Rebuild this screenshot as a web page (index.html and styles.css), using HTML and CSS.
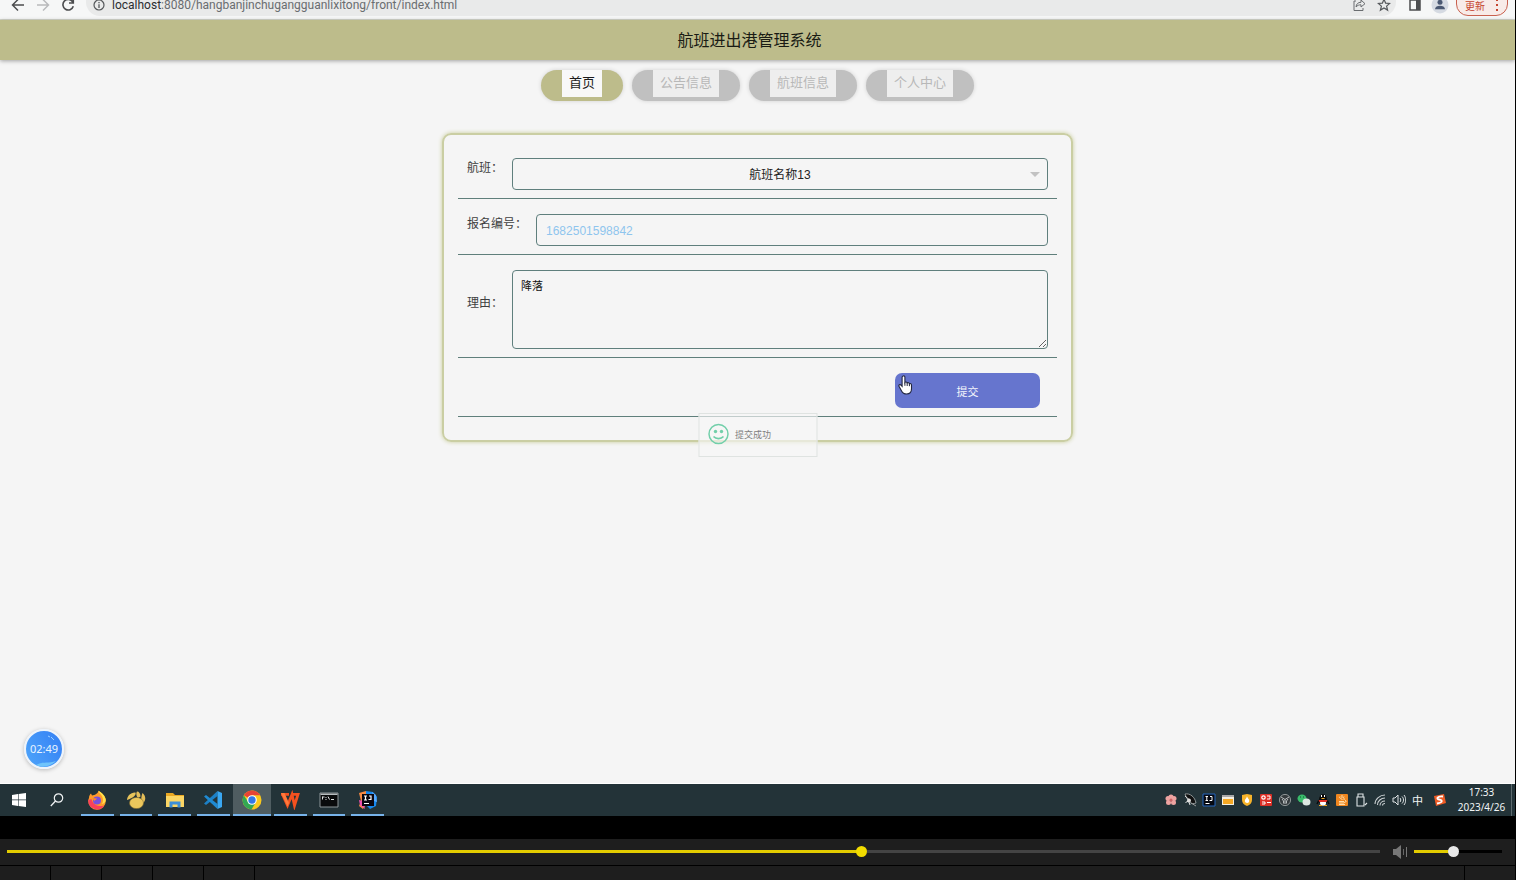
FILE: index.html
```html
<!DOCTYPE html>
<html lang="zh-CN">
<head>
<meta charset="utf-8">
<title>航班进出港管理系统</title>
<link rel="stylesheet" href="styles.css">
</head>
<body>
<div class="browser-bar">
  <button class="tool" aria-label="后退"><svg width="14" height="14" viewBox="0 0 14 14"><path d="M13 7H2M7 1.5L1.5 7L7 12.500" fill="none" stroke="#4c4d4f" stroke-width="1.500"/></svg></button>
  <button class="tool" aria-label="前进"><svg width="14" height="14" viewBox="0 0 14 14"><path d="M1 7h11M7 1.500L12.500 7L7 12.500" fill="none" stroke="#b9babc" stroke-width="1.500"/></svg></button>
  <button class="tool" aria-label="刷新"><svg width="14" height="14" viewBox="0 0 14 14"><path d="M11.800 4A5.300 5.300 0 1 0 12.300 8.300M12.300 0.500V5H8" fill="none" stroke="#4c4d4f" stroke-width="1.600"/></svg></button>
  <div class="omnibox">
    <svg width="12" height="12" viewBox="0 0 12 12"><circle cx="6" cy="6" r="5" fill="none" stroke="#55585b" stroke-width="1.200"/><path d="M6 5.300V9M6 3V4.300" stroke="#55585b" stroke-width="1.300"/></svg>
    <span class="url"><span class="host">localhost</span>:8080/hangbanjinchugangguanlixitong/front/index.html</span>
    <svg class="share" width="14" height="14" viewBox="0 0 14 14"><path d="M4 3H2v9.500h9V10M4 9c.3-3 2-4.700 5-4.700V2l4 3.700L9 9V6.800C7 6.800 5.500 7.300 4 9z" fill="none" stroke="#6a6d70"/></svg>
    <svg width="14" height="14" viewBox="0 0 14 14"><path d="M7 1.300l1.600 3.800 4.100.3-3.100 2.700 1 4L7 9.900l-3.600 2.200 1-4L1.300 5.400l4.100-.3z" fill="none" stroke="#55585b" stroke-width="1.200"/></svg>
  </div>
  <button class="tool panel-tool" aria-label="侧边栏"><svg width="12" height="12" viewBox="0 0 12 12"><path d="M1 1h10v10H1z" fill="none" stroke="#4c4d4f" stroke-width="1.500"/><path d="M7 1h4v10H7z" fill="#4c4d4f"/></svg></button>
  <button class="tool avatar" aria-label="用户"><svg width="18" height="18" viewBox="0 0 18 18"><circle cx="9" cy="9" r="8.500" fill="#d5dae2"/><circle cx="9" cy="6.300" r="2.500" fill="#4a5872"/><path d="M4 13.200c0-4.600 10-4.600 10 0z" fill="#4a5872"/></svg></button>
  <button class="update">更新<svg width="4" height="14" viewBox="0 0 4 14"><path d="M1 1h2v2H1zM1 6h2v2H1zM1 11h2v2H1z" fill="#c5442f"/></svg></button>
</div>

<main class="page">
  <header class="site-title">航班进出港管理系统</header>
  <nav class="menu">
    <a class="pill active" href="#"><span>首页</span></a>
    <a class="pill" href="#"><span>公告信息</span></a>
    <a class="pill" href="#"><span>航班信息</span></a>
    <a class="pill" href="#"><span>个人中心</span></a>
  </nav>
  <form class="panel">
    <div class="row">
      <label for="flight">航班：</label>
      <div class="select-wrap">
        <select id="flight" class="field"><option>航班名称13</option></select>
        <svg class="caret" width="10" height="5" viewBox="0 0 10 5"><path d="M0 0h10L5 5z" fill="#c2c2c2"/></svg>
      </div>
    </div>
    <div class="row">
      <label for="code">报名编号：</label>
      <input id="code" class="field code" type="text" value="1682501598842">
    </div>
    <div class="row">
      <label for="reason">理由：</label>
      <textarea id="reason" class="field reason">降落</textarea>
    </div>
    <div class="row actions">
      <button class="submit" type="button">提交</button>
      <svg class="cursor" width="16" height="20" viewBox="0 0 16 20"><path d="M5 1c1-.4 1.900.2 1.900 1.200v5.300c.7-.8 2-.5 2.300.4.800-.6 2-.2 2.200.8.900-.4 2.100.2 2.100 1.300v3.800c0 3-1.700 5.200-4.800 5.200-2.700 0-4.300-1.300-5.400-3.600L1 11.200c-.5-1.200.9-2.100 1.800-1.200l1.300 1.400V2.200C4.100 1.600 4.400 1.200 5 1z" fill="#fff" stroke="#22263f" stroke-width="1.100"/><path d="M6.900 7.500v3.300M9.200 8v3M11.400 8.900v2.300" stroke="#22263f"/></svg>
    </div>
  </form>
  <div class="toast" role="status">
    <svg width="22" height="22" viewBox="0 0 22 22"><circle cx="11" cy="11" r="9.500" fill="none" stroke="#72cfaa" stroke-width="1.500"/><circle cx="8" cy="8.500" r="1.700" fill="#72cfaa"/><circle cx="14" cy="8.500" r="1.700" fill="#72cfaa"/><path d="M6 13.500c2.500 2.800 7.500 2.800 10 0" fill="none" stroke="#72cfaa" stroke-width="1.700"/></svg>
    <span>提交成功</span>
  </div>
  <div class="timer"><svg class="wave" width="36" height="36" viewBox="0 0 36 36"><path d="M10 34c7-4 12-1 20-4-6 6-14 7-20 4z" fill="#6fc4fb"/><path d="M22 5l2 1M25 6l3 3" stroke="#9bd0ff" stroke-width="1"/></svg><span>02:49</span></div>
</main>

<footer class="taskbar">
  <button class="task" aria-label="开始"><svg width="14" height="14" viewBox="0 0 14 14"><path d="M0 2l6-1v5.600H0zM6.600.900L14 0v6.600H6.600zM0 7.300h6V13l-6-1zM6.600 7.300H14V14l-7.400-1z" fill="#fff"/></svg></button>
  <button class="task" aria-label="搜索"><svg width="14" height="14" viewBox="0 0 14 14"><circle cx="8.500" cy="5" r="4.200" fill="none" stroke="#f0f3f4" stroke-width="1.200"/><path d="M5.500 8L.800 13" stroke="#f0f3f4" stroke-width="1.300"/></svg></button>
  <div class="apps">
    <button class="task app" aria-label="Firefox"><svg width="20" height="20" viewBox="0 0 20 20"><path d="M2 8c0-2 .8-3.500 2-4.500l1 2 3-.8C9.500 4 11 3 11.500.8 15 3 18.800 6.500 18.800 11A8.800 8.800 0 0 1 1.200 11c0-1 .3-2 .8-3z" fill="#ff9a2a"/><path d="M1.300 10a8.800 8.800 0 0 0 16 5.500C13 17 6 16 4.500 9z" fill="#f9405c"/><path d="M11.500.8c0 3 4.500 4 4.500 9.200 0 2-.5 3-1.500 4 3-.5 4.300-2.500 4.300-4C18.500 6 15 3 11.500.800z" fill="#ffe04a"/><circle cx="10" cy="10.500" r="4" fill="#7950dd"/><path d="M5 8l5 .6c-.5 1.400-2 1.200-2.500 2.400z" fill="#ff8a25"/></svg></button>
    <button class="task app" aria-label="Navicat"><svg width="20" height="20" viewBox="0 0 20 20"><path d="M1 10C1 6 5 2 9.500 2.500 10.500 5 7 8 1 10z" fill="#e8c45a"/><path d="M11 1.500c2 0 3.500 2 3.500 5L12 8c-2-2-2-5-1-6.500zM16.500 3c4 3 3.500 9-.5 10.500-1.500-4-.5-8 .5-10.500z" fill="#e3bd58"/><ellipse cx="10.500" cy="13" rx="7" ry="5.600" fill="#ebc75c" stroke="#7e6a30" stroke-width=".6"/></svg></button>
    <button class="task app" aria-label="文件资源管理器"><svg width="20" height="20" viewBox="0 0 20 20"><path d="M1 3h7l2 2h9v12H1z" fill="#e9a823"/><path d="M1 6h18v11H1z" fill="#fbd664"/><path d="M4.500 17.500v-6h11v6h-3v-3h-5v3z" fill="#3d8fd6"/></svg></button>
    <button class="task app" aria-label="VS Code"><svg width="20" height="20" viewBox="0 0 20 20"><path d="M14.500 1v5L3 15l-2-1.500z" fill="#1c80c6"/><path d="M14.500 19v-5L3 5 1 6.500z" fill="#1f8ad2"/><path d="M14.500 1L19 3v14l-4.500 2z" fill="#3aa8f2"/></svg></button>
    <button class="task app current" aria-label="Chrome"><svg width="20" height="20" viewBox="0 0 20 20"><circle cx="10" cy="10" r="9.500" fill="#fbc91c"/><path d="M10 10L1.800 5.200A9.500 9.500 0 0 1 18.200 5.200H10z" fill="#e74435"/><path d="M1.800 5.200A9.500 9.500 0 0 0 9.500 19.500L14 12l-8-.2z" fill="#33a753"/><circle cx="10" cy="10" r="4.800" fill="#fff"/><circle cx="10" cy="10" r="3.700" fill="#3478e6"/></svg></button>
    <button class="task app" aria-label="WPS"><svg width="20" height="20" viewBox="0 0 20 20"><path d="M1 4.300h8M2.500 4.500l5 11 4.500-11 2.500 11L18 4.300h-6" fill="none" stroke="#f4511f" stroke-width="2.800"/><path d="M1 3h3.500L9 13l-1.500 3.500z" fill="#ff7a3c"/></svg></button>
    <button class="task app" aria-label="命令提示符"><svg width="20" height="20" viewBox="0 0 20 20"><path d="M1 3h18v14H1z" fill="#090b0c" stroke="#8d9698"/><path d="M1.500 3.500h17v1.500h-17z" fill="#b6bdbf"/><path d="M3.500 6.500v3M3.500 7h2M7 7v1M7 9v1M9 6.500l1.500 3M12 9.500h3" stroke="#dce0e1"/></svg></button>
    <button class="task app" aria-label="IntelliJ IDEA"><svg width="20" height="20" viewBox="0 0 20 20"><path d="M1 3l7-2 3 9-6 9-4-3 2-5z" fill="#f88a42"/><path d="M1 10l4 1 2 8-5-4z" fill="#ef4fb0"/><path d="M8 1l7 1 4 5-1 9-6 3-4-4z" fill="#1687ed"/><path d="M14 2l4 3 1 7-3-1z" fill="#56a9ff"/><path d="M4 4h12v12H4z" fill="#0b0710"/><path d="M6 6h3M7.500 6v4M6 10h3M11 6h2v3.500h-2.500M6 13.500h5" fill="none" stroke="#fff" stroke-width="1.200"/></svg></button>
  </div>
  <div class="tray">
    <span><svg width="14" height="14" viewBox="0 0 14 14"><g fill="#eda3a1"><circle cx="7" cy="4" r="2.600"/><circle cx="4" cy="5.500" r="2.500"/><circle cx="10" cy="5.500" r="2.500"/><circle cx="4.500" cy="9.500" r="2.500"/><circle cx="9.500" cy="9.500" r="2.500"/></g><circle cx="7" cy="7" r="1.500" fill="#cf6265"/></svg></span>
    <span><svg width="14" height="14" viewBox="0 0 14 14"><path d="M2 1c5-1 10 3 11 9-5 2-8-1-11-9z" fill="#111" stroke="#8d9495"/><path d="M2 3l4 3.500M2.500 9.500l3-1.500 1.500 4" fill="none" stroke="#ddd"/><circle cx="6" cy="7.500" r="2" fill="#ddd"/><path d="M8 10l5 3" stroke="#999"/></svg></span>
    <span><svg width="14" height="14" viewBox="0 0 14 14"><path d="M1 1h12v12H1z" fill="#060911" stroke="#2467bd"/><path d="M3.500 3.500h2.500M4.800 3.500v4M3.500 7.500h2.500M8 3.500h2v4H7.500M3.500 10.500h4" fill="none" stroke="#fff"/></svg></span>
    <span><svg width="14" height="14" viewBox="0 0 14 14"><path d="M1 2h12v10H1z" fill="#f3eee1"/><path d="M1 2h12v2H1z" fill="#a8a8a8"/><path d="M2 6h10v5H2z" fill="#f5a824"/></svg></span>
    <span><svg width="14" height="14" viewBox="0 0 14 14"><path d="M2 2l5-1 5 1v5c0 3-2 5-5 6-3-1-5-3-5-6z" fill="#f7b32a"/><path d="M7 3c0 2 3 3 2 6-1 2-5 1-4-2 0-1 2-2 2-4z" fill="#fff"/></svg></span>
    <span><svg width="14" height="14" viewBox="0 0 14 14"><rect x="1" y="1" width="12" height="12" rx="1" fill="#dc2f26"/><circle cx="4.500" cy="4.500" r="1.700" fill="none" stroke="#fff" stroke-width="1.200"/><path d="M8 3h3v3H8M3 9h3v2H3M8 9.500h4" fill="none" stroke="#fff"/></svg></span>
    <span><svg width="14" height="14" viewBox="0 0 14 14"><circle cx="7" cy="7" r="5.600" fill="#343b3e" stroke="#8d9495"/><path d="M3 4l4 2.500L11 4M7 6.500V11M4 6l1.500 2v2.500M10 6L8.500 8v2.500" fill="none" stroke="#b9bebf"/></svg></span>
    <span><svg width="14" height="14" viewBox="0 0 14 14"><ellipse cx="5" cy="5.500" rx="4.500" ry="4" fill="#39bd6b"/><ellipse cx="9.500" cy="9" rx="4" ry="3.500" fill="#dce7e2"/><path d="M3 4h1M6 4h1" stroke="#174b32"/></svg></span>
    <span><svg width="14" height="14" viewBox="0 0 14 14"><ellipse cx="7" cy="7" rx="4" ry="6" fill="#0b0b0b"/><path d="M3 7l-2 4M11 7l2 4" stroke="#0b0b0b" stroke-width="1.500"/><ellipse cx="7" cy="10" rx="3" ry="2.700" fill="#fff"/><path d="M5 3h1M8 3h1" stroke="#fff" stroke-width="2"/><path d="M2.500 7h9l-1 2h-7z" fill="#e53228"/><path d="M3 12h3v1H3zM8 12h3v1H8zM5.500 5h3v1h-3z" fill="#f5a51f"/></svg></span>
    <span><svg width="14" height="14" viewBox="0 0 14 14"><rect x="1" y="1" width="12" height="12" rx="1" fill="#ef861f"/><path d="M7 2v3M5 3.500c-2 2 3 2 2 3.500M9 3.500c-1.500 1 1 2 0 3.500M4 8.500h5M4 10h5M4 11.500h6M10 7.500c2 0 1 2-1 2" fill="none" stroke="#ffe8bc" stroke-width=".9"/></svg></span>
    <span><svg width="14" height="14" viewBox="0 0 14 14"><path d="M4 4V1h5v3M3 4h7v9H3zM11 12l2-2" fill="none" stroke="#dfe4e5" stroke-width="1.100"/></svg></span>
    <span><svg width="14" height="14" viewBox="0 0 14 14"><path d="M2 11C2 6 7 2 12 2M4.500 12C4.500 8 8 5 12 5M7 12.500C7 10 9 8 12 8M9.500 12.500c0-1.200 1-2 2.500-2" fill="none" stroke="#c9cfd1" stroke-width="1.100"/></svg></span>
    <span><svg width="14" height="14" viewBox="0 0 14 14"><path d="M1 5h2l3-3v10L3 9H1zM8 5c1 1 1 3 0 4M10 3.500c2 2 2 5 0 7M12 2c2.300 3 2.300 7 0 10" fill="none" stroke="#dfe4e5"/></svg></span>
    <span class="ime">中</span>
    <span class="sogou"><svg width="14" height="14" viewBox="0 0 14 14"><path d="M1 3l10-2 2 9-10 3z" fill="#ef5b24"/><path d="M10 3.500C4 3 3 6 6 6.500S11 9 4 10.500" fill="none" stroke="#fff" stroke-width="1.800"/></svg></span>
  </div>
  <div class="clock"><span class="time">17:33</span><span class="date">2023/4/26</span></div>
</footer>

<section class="player">
  <div class="controls">
    <input class="range seek" type="range" min="0" max="1000" value="623" aria-label="播放进度" style="--fill:62.300%">
    <svg class="speaker" width="16" height="14" viewBox="0 0 16 14"><path d="M1 4h3l5-4v14l-5-4H1z" fill="#777"/><path d="M11.500 4v6" stroke="#666"/><path d="M14.500 2v10" stroke="#777"/></svg>
    <input class="range volume" type="range" min="0" max="1000" value="445" aria-label="音量" style="--fill:44.500%">
  </div>
  <div class="cells"><i></i><i></i><i></i><i></i><i></i><i class="wide"></i><i></i></div>
</section>
</body>
</html>
```
FILE: styles.css
```css
* { box-sizing: border-box; }

body {
  margin: 0;
  min-height: 100vh;
  display: flex;
  flex-direction: column;
  border-right: 1px solid #000;
  background: #000;
  font-family: "Liberation Sans", "Noto Sans CJK SC", sans-serif;
  font-size: 12px;
  overflow: hidden;
}

button { font-family: inherit; border: 0; padding: 0; background: none; }
svg { display: block; flex: none; }

/* browser toolbar, scrolled partly out of view */
.browser-bar {
  height: 20px;
  padding: 0 7px 3px;
  display: flex;
  align-items: flex-end;
  background: #f6f7f7;
  border-bottom: 1px solid #d6d8cd;
}
.tool {
  width: 25px;
  height: 22px;
  flex: none;
  display: grid;
  place-items: center;
  padding-right: 4px;
}
.omnibox {
  flex: 1;
  height: 22px;
  margin-left: 4px;
  padding: 0 5px 0 7px;
  display: flex;
  align-items: center;
  gap: 7px;
  border-radius: 0 0 14px 14px;
  background: #e9eaea;
}
.url { flex: 1; color: #6a6d70; font: 12px/14px Roboto, sans-serif; }
.host { color: #2b2d30; }
.share { margin-right: 4px; }
.panel-tool { margin-left: 8px; }
.update {
  height: 22px;
  width: 52px;
  margin-left: 2px;
  display: flex;
  align-items: center;
  justify-content: center;
  gap: 10px;
  border: 1px solid #c9614f;
  border-radius: 0 0 12px 12px;
  background: #f8ebe8;
  color: #c5442f;
  font-size: 10px;
}

/* site */
.page { flex: 1; position: relative; background: #f5f5f5; border-bottom: 1px solid #fff; }
.site-title {
  height: 40px;
  padding-right: 16px;
  line-height: 41px;
  text-align: center;
  font-size: 16px;
  color: #191b14;
  background: #bdbc8b;
  box-shadow: 0 1px 4px rgba(0, 0, 0, .35);
}
.menu { display: flex; justify-content: center; gap: 9px; margin-top: 10px; }
.pill {
  padding: 0 21px 4px;
  border-radius: 16px;
  background: #c0c0c0;
  box-shadow: 0 0 4px rgba(0, 0, 0, .15);
  color: #b8b8b8;
  font-size: 13px;
  text-decoration: none;
}
.pill span { display: block; padding: 0 7px 2px; line-height: 25px; background: #eee; }
.pill.active { background: #bdbc8b; color: #1c1c1c; }
.pill.active span { background: #f8f8f8; }

.panel {
  width: 631px;
  max-width: 96%;
  margin: 32px auto 0;
  padding: 8px 14px 23px;
  border: 2px solid #cacea3;
  border-radius: 9px;
  box-shadow: 0 0 4px #c8cc98;
}
.row {
  position: relative;
  display: flex;
  align-items: center;
  gap: 9px;
  padding: 15px 9px 8px;
  border-bottom: 1px solid #5f7f7b;
}
.row label { padding-bottom: 13px; line-height: 18px; color: #3f3f3f; white-space: nowrap; }
.field {
  flex: 1;
  width: 100%;
  min-width: 0;
  height: 32px;
  margin: 0;
  border: 1px solid #5f7f7d;
  border-radius: 4px;
  background: transparent;
  color: #222;
  font-family: inherit;
  font-size: 12px;
}
.select-wrap { flex: 1; position: relative; display: flex; }
.select-wrap .field { appearance: none; padding: 1px 0 0; text-align: center; text-align-last: center; }
.caret { position: absolute; right: 8px; top: 14px; pointer-events: none; }
.code { padding: 1px 9px 0; color: #8fc5ee; }
.reason { height: 79px; padding: 7px 8px; font-size: 11px; line-height: 16px; color: #111; }
.actions { justify-content: flex-end; padding-right: 17px; }
.submit {
  width: 145px;
  height: 35px;
  border-radius: 7px;
  background: #6675ce;
  color: #f4f5fc;
  font-size: 11px;
}
.cursor { position: absolute; right: 143px; top: 17px; }

.toast {
  position: absolute;
  left: 50%;
  top: 393px;
  transform: translateX(-50%);
  width: 119px;
  height: 44px;
  padding: 0 9px 2px 8px;
  display: flex;
  align-items: center;
  gap: 6px;
  border: 1px solid #dfe3e1;
  background: rgba(246, 246, 246, .65);
  color: #808080;
  font-size: 9px;
}
.timer {
  position: absolute;
  left: 24px;
  bottom: 14px;
  width: 40px;
  height: 40px;
  display: grid;
  place-items: center;
  border: 2px solid #eef4fb;
  border-radius: 50%;
  background: linear-gradient(60deg, #4ea5fa, #347ff4);
  box-shadow: 0 1px 4px rgba(0, 0, 0, .25);
  color: #e9f4ff;
  font: 11px/14px "Noto Sans", sans-serif;
}
.timer > * { grid-area: 1 / 1; }

/* taskbar */
.taskbar { height: 32px; display: flex; background: #233338; color: #f2f5f6; }
.task { width: 38px; display: grid; place-items: center; }
.apps { width: 311px; padding-left: 2px; display: flex; }
.app { flex: 1; position: relative; }
.app::after {
  content: "";
  position: absolute;
  left: 3px;
  right: 3px;
  bottom: 0;
  height: 2px;
  background: #77b3ea;
}
.current { background: #4f5d61; }
.current::after { left: 0; right: 0; }
.tray { margin-left: auto; display: flex; }
.tray span { width: 19px; display: grid; place-items: center; }
.tray .ime { font-size: 11px; }
.tray .sogou { width: 25px; }
.clock {
  width: 60px;
  margin-right: 3px;
  display: flex;
  flex-direction: column;
  justify-content: center;
  text-align: center;
  border-right: 1px solid #5c6a6e;
  font: 10px/15px "Noto Sans", sans-serif;
}

/* video player */
.player { padding-top: 23px; }
.controls {
  height: 26px;
  padding: 0 13px 1px 7px;
  display: flex;
  align-items: center;
  background: #1e1e1e;
}
.speaker { margin: 0 6px 0 12px; }
.range {
  --track: #444;
  --thumb: #f2dc00;
  appearance: none;
  height: 11px;
  margin: 0;
  background: linear-gradient(90deg, #e3cc00 var(--fill), var(--track) var(--fill)) center / 100% 3px no-repeat;
}
.range::-webkit-slider-thumb {
  appearance: none;
  width: 11px;
  height: 11px;
  border-radius: 50%;
  background: var(--thumb);
}
.seek { flex: 1; }
.volume { --track: #000; --thumb: #e8e8e8; width: 88px; }
.cells { display: flex; gap: 1px; height: 15px; padding-top: 1px; }
.cells i { width: 50px; background: #1e1e1e; }
.cells .wide { flex: 1; }
```
